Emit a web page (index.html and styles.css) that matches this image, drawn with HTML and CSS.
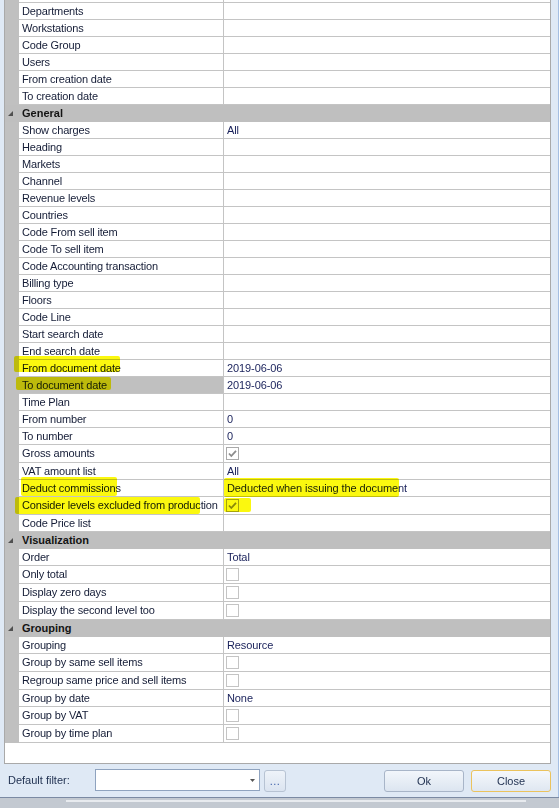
FILE: index.html
```html
<!DOCTYPE html>
<html>
<head>
<meta charset="utf-8">
<link rel="stylesheet" href="styles.css">
</head>
<body>
<div class="window">
  <div class="main">
    <div class="grid">
      <div class="row top"><div class="gut"></div><div class="lab"></div><div class="val"></div></div>
      <div class="row"><div class="gut"></div><div class="lab">Departments</div><div class="val"></div></div>
      <div class="row"><div class="gut"></div><div class="lab">Workstations</div><div class="val"></div></div>
      <div class="row"><div class="gut"></div><div class="lab">Code Group</div><div class="val"></div></div>
      <div class="row"><div class="gut"></div><div class="lab">Users</div><div class="val"></div></div>
      <div class="row"><div class="gut"></div><div class="lab">From creation date</div><div class="val"></div></div>
      <div class="row"><div class="gut"></div><div class="lab">To creation date</div><div class="val"></div></div>

      <div class="row hdr"><div class="gut"><svg class="tri" width="5" height="5" viewBox="0 0 5 5"><polygon points="5,0 5,5 0,5" /></svg></div><div class="htext">General</div></div>
      <div class="row"><div class="gut"></div><div class="lab">Show charges</div><div class="val">All</div></div>
      <div class="row"><div class="gut"></div><div class="lab">Heading</div><div class="val"></div></div>
      <div class="row"><div class="gut"></div><div class="lab">Markets</div><div class="val"></div></div>
      <div class="row"><div class="gut"></div><div class="lab">Channel</div><div class="val"></div></div>
      <div class="row"><div class="gut"></div><div class="lab">Revenue levels</div><div class="val"></div></div>
      <div class="row"><div class="gut"></div><div class="lab">Countries</div><div class="val"></div></div>
      <div class="row"><div class="gut"></div><div class="lab">Code From sell item</div><div class="val"></div></div>
      <div class="row"><div class="gut"></div><div class="lab">Code To sell item</div><div class="val"></div></div>
      <div class="row"><div class="gut"></div><div class="lab">Code Accounting transaction</div><div class="val"></div></div>
      <div class="row"><div class="gut"></div><div class="lab">Billing type</div><div class="val"></div></div>
      <div class="row"><div class="gut"></div><div class="lab">Floors</div><div class="val"></div></div>
      <div class="row"><div class="gut"></div><div class="lab">Code Line</div><div class="val"></div></div>
      <div class="row"><div class="gut"></div><div class="lab">Start search date</div><div class="val"></div></div>
      <div class="row"><div class="gut"></div><div class="lab">End search date</div><div class="val"></div></div>
      <div class="row"><div class="gut"></div><div class="lab">From document date</div><div class="val">2019-06-06</div><span class="hl hl-from"></span></div>
      <div class="row"><div class="gut"></div><div class="lab sel">To document date</div><div class="val">2019-06-06</div><span class="hl hl-to"></span></div>
      <div class="row"><div class="gut"></div><div class="lab">Time Plan</div><div class="val"></div></div>
      <div class="row"><div class="gut"></div><div class="lab">From number</div><div class="val">0</div></div>
      <div class="row"><div class="gut"></div><div class="lab">To number</div><div class="val">0</div></div>
      <div class="row cb"><div class="gut"></div><div class="lab">Gross amounts</div><div class="val"><svg class="box" width="13" height="13" viewBox="0 0 13 13"><rect x="0.5" y="0.5" width="12" height="12" class="boxr"/><polyline points="3,6.5 5.3,9 10,3.8" class="tick"/></svg></div></div>
      <div class="row"><div class="gut"></div><div class="lab">VAT amount list</div><div class="val">All</div></div>
      <div class="row"><div class="gut"></div><div class="lab">Deduct commissions</div><div class="val">Deducted when issuing the document</div><span class="hl hl-ded"></span><span class="hl hl-dedv"></span></div>
      <div class="row cb"><div class="gut"></div><div class="lab">Consider levels excluded from production</div><div class="val"><svg class="box" width="13" height="13" viewBox="0 0 13 13"><rect x="0.5" y="0.5" width="12" height="12" class="boxr"/><polyline points="3,6.5 5.3,9 10,3.8" class="tick"/></svg></div><span class="hl hl-con"></span><span class="hl hl-conv"></span></div>
      <div class="row"><div class="gut"></div><div class="lab">Code Price list</div><div class="val"></div></div>

      <div class="row hdr"><div class="gut"><svg class="tri" width="5" height="5" viewBox="0 0 5 5"><polygon points="5,0 5,5 0,5" /></svg></div><div class="htext">Visualization</div></div>
      <div class="row"><div class="gut"></div><div class="lab">Order</div><div class="val">Total</div></div>
      <div class="row cb"><div class="gut"></div><div class="lab">Only total</div><div class="val"><svg class="box" width="13" height="13" viewBox="0 0 13 13"><rect x="0.5" y="0.5" width="12" height="12" class="boxe"/></svg></div></div>
      <div class="row cb"><div class="gut"></div><div class="lab">Display zero days</div><div class="val"><svg class="box" width="13" height="13" viewBox="0 0 13 13"><rect x="0.5" y="0.5" width="12" height="12" class="boxe"/></svg></div></div>
      <div class="row cb"><div class="gut"></div><div class="lab">Display the second level too</div><div class="val"><svg class="box" width="13" height="13" viewBox="0 0 13 13"><rect x="0.5" y="0.5" width="12" height="12" class="boxe"/></svg></div></div>

      <div class="row hdr"><div class="gut"><svg class="tri" width="5" height="5" viewBox="0 0 5 5"><polygon points="5,0 5,5 0,5" /></svg></div><div class="htext">Grouping</div></div>
      <div class="row"><div class="gut"></div><div class="lab">Grouping</div><div class="val">Resource</div></div>
      <div class="row cb"><div class="gut"></div><div class="lab">Group by same sell items</div><div class="val"><svg class="box" width="13" height="13" viewBox="0 0 13 13"><rect x="0.5" y="0.5" width="12" height="12" class="boxe"/></svg></div></div>
      <div class="row cb"><div class="gut"></div><div class="lab">Regroup same price and sell items</div><div class="val"><svg class="box" width="13" height="13" viewBox="0 0 13 13"><rect x="0.5" y="0.5" width="12" height="12" class="boxe"/></svg></div></div>
      <div class="row"><div class="gut"></div><div class="lab">Group by date</div><div class="val">None</div></div>
      <div class="row cb"><div class="gut"></div><div class="lab">Group by VAT</div><div class="val"><svg class="box" width="13" height="13" viewBox="0 0 13 13"><rect x="0.5" y="0.5" width="12" height="12" class="boxe"/></svg></div></div>
      <div class="row cb"><div class="gut"></div><div class="lab">Group by time plan</div><div class="val"><svg class="box" width="13" height="13" viewBox="0 0 13 13"><rect x="0.5" y="0.5" width="12" height="12" class="boxe"/></svg></div></div>
      <div class="empty"></div>
    </div>

    <div class="footer">
      <div class="flabel">Default filter:</div>
      <div class="combo"><svg class="arrow" width="5" height="3" viewBox="0 0 5 3"><polygon points="0,0 5,0 2.5,3"/></svg></div>
      <div class="dots">...</div>
      <div class="spacer"></div>
      <div class="btn">Ok</div>
      <div class="btn close">Close</div>
    </div>
  </div>
  <div class="strip"><div class="stripin"></div></div>
</div>
</body>
</html>
```

FILE: styles.css
```css
html, body {
  margin: 0;
  padding: 0;
}
body {
  font-family: "Liberation Sans", Arial, sans-serif;
  font-size: 11px;
  color: #141c36;
  background: #dfe9f5;
}
.window {
  width: 559px;
  height: 808px;
  display: flex;
  flex-direction: column;
  overflow: hidden;
}
.main {
  flex: none;
  height: 797px;
  border-right: 1px solid #a4bee2;
  box-sizing: border-box;
  background: #dfe9f5;
  display: flex;
  flex-direction: column;
}
.grid {
  margin-left: 4px;
  width: 547px;
  box-sizing: border-box;
  border: 1px solid #a9a9a9;
  border-top: none;
  background: #fff;
  flex: none;
}
.row {
  display: flex;
  height: 17px;
  position: relative;
}
.row.top {
  height: 3px;
}
.row.cb {
  height: 18px;
}
.gut {
  width: 14px;
  flex: none;
  background: #c0c0c0;
  position: relative;
}
.lab {
  width: 205px;
  flex: none;
  box-sizing: border-box;
  border-right: 1px solid #c4c4c4;
  border-bottom: 1px solid #c4c4c4;
  padding-left: 3px;
  line-height: 16px;
  white-space: nowrap;
  overflow: hidden;
  letter-spacing: -0.15px;
}
.lab.sel {
  background: #c0c0c0;
}
.val {
  flex: 1;
  border-bottom: 1px solid #c4c4c4;
  padding-left: 3px;
  line-height: 16px;
  white-space: nowrap;
  color: #18205a;
  letter-spacing: -0.1px;
}
.row.cb .lab,
.row.cb .val {
  line-height: 17px;
}
.row.cb .val {
  padding-left: 2px;
}
.box {
  display: block;
  margin-top: 2px;
}
.boxr {
  fill: #fff;
  stroke: #a9a9a9;
  stroke-width: 1;
}
.boxe {
  fill: #fff;
  stroke: #c4c4c4;
  stroke-width: 1;
}
.tick {
  fill: none;
  stroke: #8c8c8c;
  stroke-width: 1.8;
}
.row.hdr {
  background: #bfbfbf;
  height: 17px;
  font-weight: bold;
  color: #141414;
}
.row.hdr .gut {
  background: #bfbfbf;
}
.tri {
  position: absolute;
  left: 3px;
  top: 6px;
}
.tri polygon {
  fill: #505050;
}
.htext {
  padding-left: 3px;
  line-height: 16px;
}
.empty {
  height: 20px;
}

/* highlighter marks */
.hl {
  position: absolute;
  background: #fbf80f;
  mix-blend-mode: multiply;
  border-radius: 2px;
  pointer-events: none;
}
.hl-from { left: 9px; top: -4px; width: 106px; height: 16px; }
.hl-to   { left: 11px; top: 0; width: 95px; height: 13px; }
.hl-ded  { left: 16px; top: -3px; width: 96px; height: 19px; }
.hl-dedv { left: 219px; top: -2px; width: 175px; height: 19px; }
.hl-con  { left: 10px; top: 0; width: 185px; height: 17px; }
.hl-conv { left: 219px; top: 1px; width: 27px; height: 14px; }

/* footer */
.footer {
  flex: 1;
  display: flex;
  align-items: flex-start;
  padding: 5px 7px 0 8px;
  color: #1e2f4f;
}
.flabel {
  width: 87px;
  line-height: 22px;
  flex: none;
}
.combo {
  width: 165px;
  height: 22px;
  box-sizing: border-box;
  border: 1px solid #8fa3bf;
  background: #fff;
  display: flex;
  align-items: center;
  justify-content: flex-end;
  padding-right: 4px;
  flex: none;
}
.arrow polygon {
  fill: #555;
}
.dots {
  margin-left: 4px;
  margin-top: 1px;
  width: 22px;
  height: 22px;
  box-sizing: border-box;
  border: 1px solid #b7c3d3;
  border-radius: 3px;
  background: linear-gradient(#eef3f9, #dbe4f0);
  color: #3b5ea8;
  text-align: center;
  line-height: 20px;
  font-size: 11px;
  letter-spacing: 0.5px;
  flex: none;
}
.spacer {
  flex: 1;
}
.btn {
  margin-top: 1px;
  width: 80px;
  height: 22px;
  box-sizing: border-box;
  border: 1px solid #a8b5c8;
  border-radius: 3px;
  background: linear-gradient(#f2f6fb, #dce5f0);
  text-align: center;
  line-height: 20px;
  color: #1e2f4f;
  flex: none;
}
.btn.close {
  margin-left: 7px;
  border-color: #ebc35d;
  background: linear-gradient(#f5f8fc, #dfe7f1);
}
.strip {
  flex: none;
  height: 11px;
  border-top: 1px solid #7b8aa3;
  box-sizing: border-box;
  background: #c3c9d1;
}
.stripin {
  margin-left: 66px;
  margin-top: 2px;
  width: 460px;
  height: 2px;
  background: #e8ebef;
}
```
